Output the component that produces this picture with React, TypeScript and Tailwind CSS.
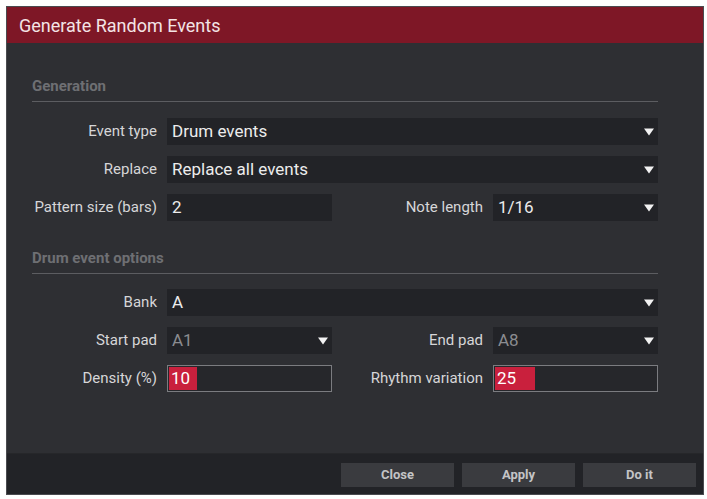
const Arrow = () => (
  <svg width="10" height="8" viewBox="0 0 10 8" className="shrink-0">
    <path d="M0 0.5 H10 L5 7.5 Z" fill="#f2f2f2" />
  </svg>
);

const Select = ({ value, dim = false, className = "" }: { value: string; dim?: boolean; className?: string }) => (
  <div className={`flex h-[27px] items-center justify-between bg-[#222327] pl-[5px] pr-[4px] ${className}`}>
    <span className={`text-[17px] ${dim ? "text-[#8b8c90]" : "text-[#ececec]"}`}>{value}</span>
    <Arrow />
  </div>
);

const TextBox = ({ value }: { value: string }) => (
  <div className="flex h-[27px] w-[165px] items-center bg-[#222327] pl-[5px]">
    <span className="text-[17px] text-[#ececec]">{value}</span>
  </div>
);

const NumberBox = ({ value, fill }: { value: string; fill: number }) => (
  <div className="flex h-[27px] w-[165px] items-center border border-[#7b7c80] bg-[#26272b] p-[1px]">
    <div className="flex h-full items-center bg-[#c9203d] pl-[2px] text-[17px] text-white" style={{ width: fill }}>
      {value}
    </div>
  </div>
);

const Label = ({ children, className = "w-[135px]" }: { children: string; className?: string }) => (
  <div className={`shrink-0 pr-[10px] text-right text-[15px] text-[#d6d6d8] ${className}`}>{children}</div>
);

const Heading = ({ children, className }: { children: string; className: string }) => (
  <div className={`border-b border-[#5c5d61] pb-[6px] text-[15px] leading-[18px] font-bold text-[#6e6f73] ${className}`}>
    {children}
  </div>
);

const Button = ({ children }: { children: string }) => (
  <button className="h-[24px] w-[113px] bg-[#3a3b3f] text-[13px] font-bold text-[#c4c4c6]">{children}</button>
);

export default function App() {
  return (
    <div className="min-h-screen bg-white p-[6px] pr-[3px] font-['Roboto',sans-serif]">
      <div className="flex h-[489px] w-[698px] flex-col border border-[#4a4b4f] bg-[#2e2f33]">
        <div className="flex h-[36px] items-center bg-[#7e1726] pl-[12px] text-[18px] text-[#f3e4e5]">
          Generate Random Events
        </div>

        <div className="flex flex-1 flex-col pl-[25px] pr-[45px]">
          <Heading className="mt-[34px]">Generation</Heading>

          <div className="mt-[16px] flex flex-col gap-[11px]">
            <div className="flex items-center">
              <Label>Event type</Label>
              <Select value="Drum events" className="flex-1" />
            </div>
            <div className="flex items-center">
              <Label>Replace</Label>
              <Select value="Replace all events" className="flex-1" />
            </div>
            <div className="flex items-center">
              <Label>Pattern size (bars)</Label>
              <TextBox value="2" />
              <Label className="flex-1">Note length</Label>
              <Select value="1/16" className="w-[165px]" />
            </div>
          </div>

          <Heading className="mt-[28px]">Drum event options</Heading>

          <div className="mt-[15px] flex flex-col gap-[11px]">
            <div className="flex items-center">
              <Label>Bank</Label>
              <Select value="A" className="flex-1" />
            </div>
            <div className="flex items-center">
              <Label>Start pad</Label>
              <Select value="A1" dim className="w-[165px]" />
              <Label className="flex-1">End pad</Label>
              <Select value="A8" dim className="w-[165px]" />
            </div>
            <div className="flex items-center">
              <Label>Density (%)</Label>
              <NumberBox value="10" fill={28} />
              <Label className="flex-1">Rhythm variation</Label>
              <NumberBox value="25" fill={40} />
            </div>
          </div>
        </div>

        <div className="flex h-[41px] justify-end gap-[8px] border-t border-[#26272a] bg-[#222327] pt-[9px] pr-[7px]">
          <Button>Close</Button>
          <Button>Apply</Button>
          <Button>Do it</Button>
        </div>
      </div>
    </div>
  );
}
